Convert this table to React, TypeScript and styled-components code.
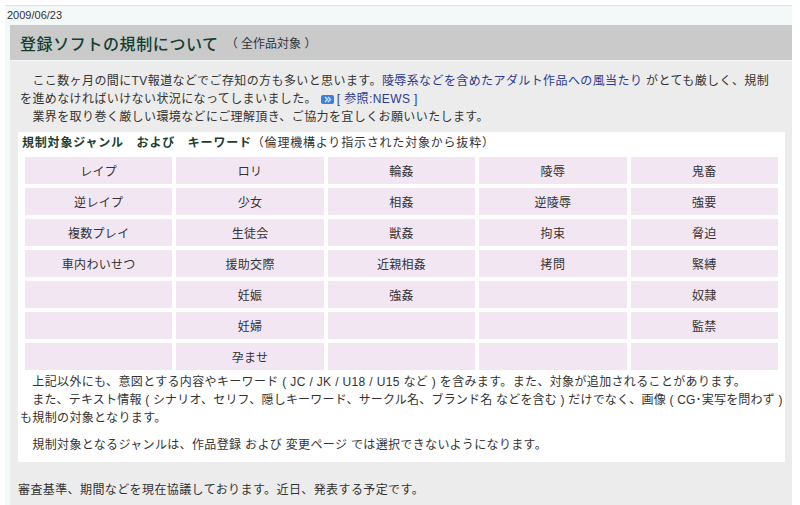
import React from "react";
import styled, { createGlobalStyle } from "styled-components";

const GlobalStyle = createGlobalStyle`
  html, body { margin: 0; padding: 0; background: #ffffff; }
  body {
    font-family: "Liberation Sans", "Noto Sans CJK JP", sans-serif;
    font-size: 12px;
    color: #333333;
  }
`;

const Frame = styled.div`
  margin: 5px 8px 0 5px;
  border-top: 1px solid #cde9e5;
  background: #f2f9f8;
  min-height: 520px;
`;

const DateRow = styled.div`
  height: 19px;
  line-height: 19px;
  padding-left: 2px;
  font-size: 11px;
  color: #333;
`;

const Column = styled.div`
  margin-left: 5px;
`;

const TitleBar = styled.div`
  height: 35px;
  background: #cacaca;
  display: flex;
  align-items: center;
  padding-left: 10px;
  gap: 7px;
`;

const Title = styled.h1`
  margin: 0;
  font-size: 16px;
  font-weight: 500;
  letter-spacing: 0.6px;
  color: #123f33;
  font-family: "Noto Sans CJK JP", sans-serif;
`;

const TitleSub = styled.span`
  font-size: 12px;
  color: #333;
`;

const Content = styled.div`
  margin-top: 1px;
  background: #ececec;
  padding: 11px 7px 30px 8px;
`;

const Lead = styled.p`
  margin: 0;
  padding: 0 2px;
  line-height: 18px;
  letter-spacing: 0.4px;
`;

const Link = styled.a`
  color: #2b3a92;
  text-decoration: none;
`;

const Box = styled.div`
  margin-top: 6px;
  background: #ffffff;
  padding: 2px 0 8px 2px;
`;

const Heading = styled.div`
  padding-left: 2px;
  line-height: 18px;
  letter-spacing: 0.8px;
`;

const HeadStrong = styled.strong`
  color: #1c3f30;
  font-weight: bold;
`;

const Grid = styled.div`
  display: grid;
  grid-template-columns: repeat(5, 1fr);
  gap: 4px;
  margin: 5px 7px 0 5px;
`;

const Cell = styled.div`
  height: 27px;
  background: #f3e6f3;
  display: flex;
  align-items: center;
  justify-content: center;
  letter-spacing: 0.3px;
`;

const Notes = styled.div<{ $gap?: number }>`
  margin-top: ${(p) => p.$gap ?? 0}px;
`;

const NoteLine = styled.div<{ $ls?: number }>`
  line-height: 18px;
  white-space: nowrap;
  letter-spacing: ${(p) => p.$ls ?? 0.35}px;
`;

const Footer = styled.p`
  margin: 19px 0 0 0;
  line-height: 18px;
  letter-spacing: 0.4px;
`;

const IconWrap = styled.span`
  display: inline-block;
  vertical-align: -1px;
  margin-right: 3px;
  line-height: 0;
`;

const ArrowIcon = () => (
  <IconWrap>
    <svg width="13" height="9" viewBox="0 0 13 9">
      <rect x="0" y="0" width="13" height="9" rx="2" fill="#3f7fdc" />
      <path d="M4 2 L6.5 4.5 L4 7" stroke="#cfe3ff" strokeWidth="1.4" fill="none" />
      <path d="M7 2 L9.5 4.5 L7 7" stroke="#cfe3ff" strokeWidth="1.4" fill="none" />
    </svg>
  </IconWrap>
);

const rows: string[][] = [
  ["レイプ", "ロリ", "輪姦", "陵辱", "鬼畜"],
  ["逆レイプ", "少女", "相姦", "逆陵辱", "強要"],
  ["複数プレイ", "生徒会", "獣姦", "拘束", "脅迫"],
  ["車内わいせつ", "援助交際", "近親相姦", "拷問", "緊縛"],
  ["", "妊娠", "強姦", "", "奴隷"],
  ["", "妊婦", "", "", "監禁"],
  ["", "孕ませ", "", "", ""],
];

export default function App() {
  return (
    <>
      <GlobalStyle />
      <Frame>
        <DateRow>2009/06/23</DateRow>
        <Column>
          <TitleBar>
            <Title>登録ソフトの規制について</Title>
            <TitleSub>（ 全作品対象 ）</TitleSub>
          </TitleBar>
          <Content>
            <Lead>
              {"\u3000"}ここ数ヶ月の間にTV報道などでご存知の方も多いと思います。
              <Link href="#">陵辱系などを含めたアダルト作品への風当たり</Link> がとても厳しく、規制
              <br />
              を進めなければいけない状況になってしまいました。 <ArrowIcon />
              <Link href="#">[ 参照:NEWS ]</Link>
              <br />
              {"\u3000"}業界を取り巻く厳しい環境などにご理解頂き、ご協力を宜しくお願いいたします。
            </Lead>
            <Box>
              <Heading>
                <HeadStrong>規制対象ジャンル　および　キーワード</HeadStrong>（倫理機構より指示された対象から抜粋）
              </Heading>
              <Grid>
                {rows.flatMap((r, i) =>
                  r.map((c, j) => <Cell key={`${i}-${j}`}>{c}</Cell>)
                )}
              </Grid>
              <Notes $gap={3}>
                <NoteLine $ls={0.35}>
                  {"\u3000"}上記以外にも、意図とする内容やキーワード ( JC / JK / U18 / U15 など ) を含みます。また、対象が追加されることがあります。
                </NoteLine>
                <NoteLine $ls={0.2}>
                  {"\u3000"}また、テキスト情報 ( シナリオ、セリフ、隠しキーワード、サークル名、ブランド名 などを含む ) だけでなく、画像 ( CG･実写を問わず )
                </NoteLine>
                <NoteLine $ls={0.35}>も規制の対象となります。</NoteLine>
              </Notes>
              <Notes $gap={9}>
                <NoteLine $ls={0.35}>
                  {"\u3000"}規制対象となるジャンルは、作品登録 および 変更ページ では選択できないようになります。
                </NoteLine>
              </Notes>
            </Box>
            <Footer>審査基準、期間などを現在協議しております。近日、発表する予定です。</Footer>
          </Content>
        </Column>
      </Frame>
    </>
  );
}
